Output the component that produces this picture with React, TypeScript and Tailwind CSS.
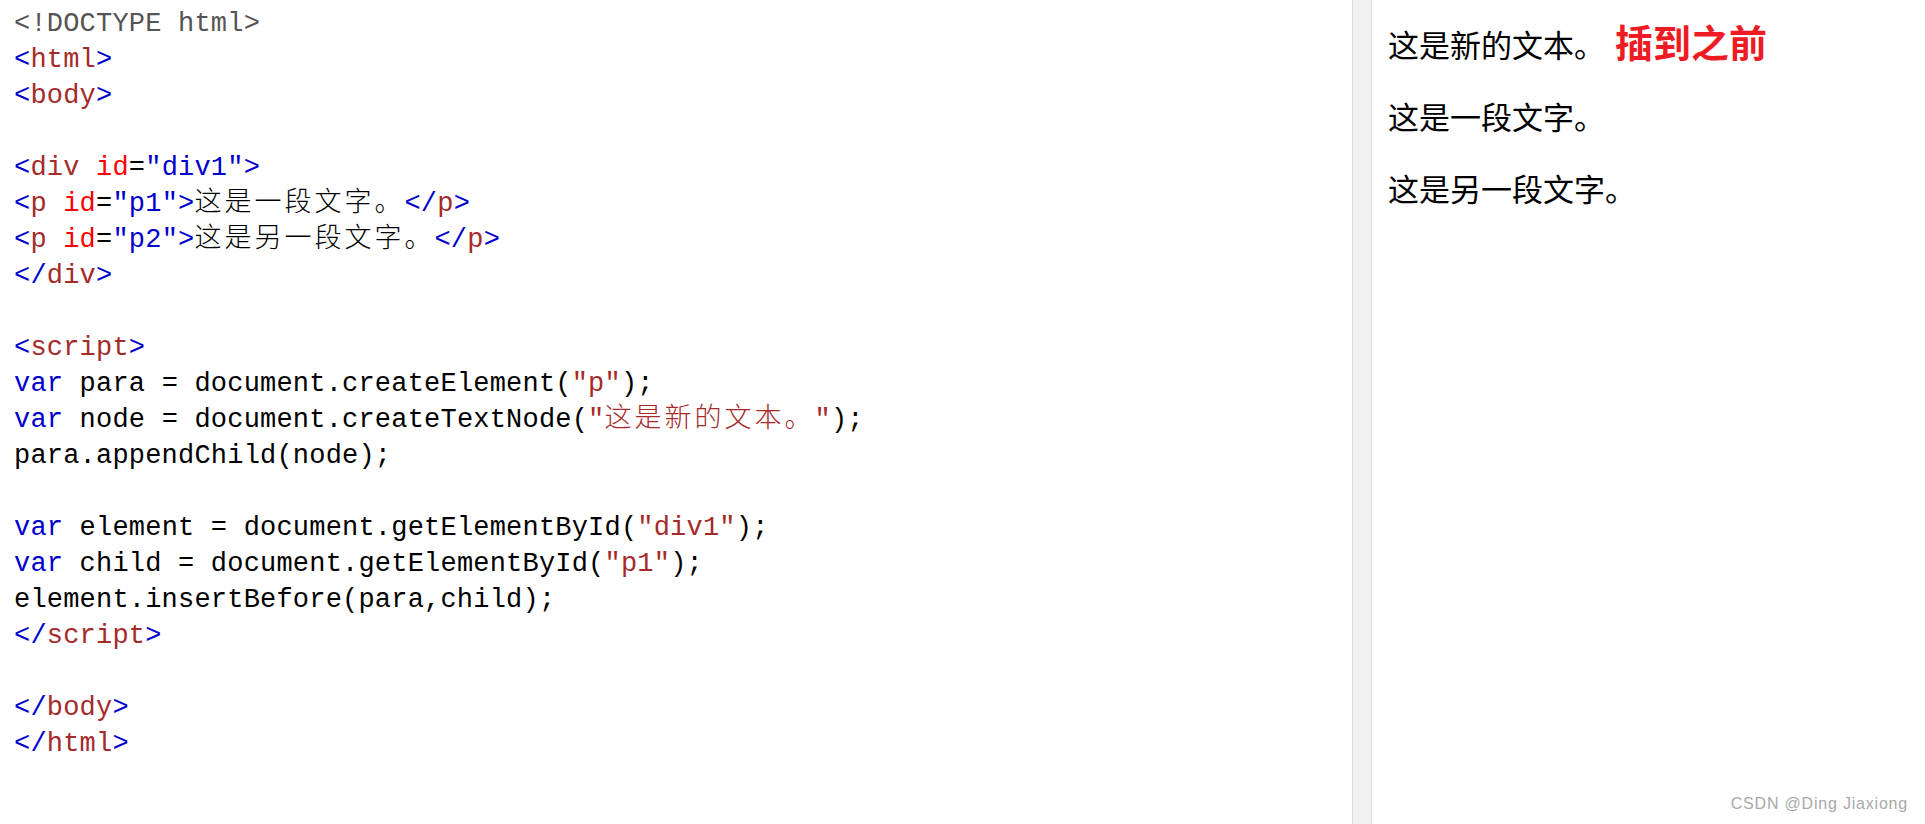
import React from "react";

type Seg = [string, string];

const B = "text-[#0000cd]";
const N = "text-[#a52a2a]";
const R = "text-[#ff0000]";
const K = "text-black";
const G = "text-[#555555]";
const CJ = "cjk";

const lines: Seg[][] = [
  [["<!DOCTYPE html>", G]],
  [["<", B], ["html", N], [">", B]],
  [["<", B], ["body", N], [">", B]],
  [],
  [["<", B], ["div", N], [" ", K], ["id", R], ["=", K], ["\"div1\"", B], [">", B]],
  [["<", B], ["p", N], [" ", K], ["id", R], ["=", K], ["\"p1\"", B], [">", B], ["这是一段文字。", CJ + K], ["</", B], ["p", N], [">", B]],
  [["<", B], ["p", N], [" ", K], ["id", R], ["=", K], ["\"p2\"", B], [">", B], ["这是另一段文字。", CJ + K], ["</", B], ["p", N], [">", B]],
  [["</", B], ["div", N], [">", B]],
  [],
  [["<", B], ["script", N], [">", B]],
  [["var", B], [" para = document.createElement(", K], ["\"p\"", N], [");", K]],
  [["var", B], [" node = document.createTextNode(", K], ["\"", N], ["这是新的文本。", CJ + N], ["\"", N], [");", K]],
  [["para.appendChild(node);", K]],
  [],
  [["var", B], [" element = document.getElementById(", K], ["\"div1\"", N], [");", K]],
  [["var", B], [" child = document.getElementById(", K], ["\"p1\"", N], [");", K]],
  [["element.insertBefore(para,child);", K]],
  [["</", B], ["script", N], [">", B]],
  [],
  [["</", B], ["body", N], [">", B]],
  [["</", B], ["html", N], [">", B]],
];

function Segment({ seg }: { seg: Seg }) {
  const [text, cls] = seg;
  if (cls.startsWith(CJ)) {
    const color = cls.slice(CJ.length);
    return (
      <span
        className={`${color} font-light tracking-[3px] leading-[0px]`}
        style={{ fontFamily: '"Noto Sans CJK SC", sans-serif' }}
      >
        {text}
      </span>
    );
  }
  return <span className={cls}>{text}</span>;
}

export default function App() {
  return (
    <div className="flex h-[824px] w-full overflow-hidden bg-white">
      <div
        className="w-[1352px] shrink-0 pl-[14px] pt-[6px] text-[27px] leading-[36px] tracking-[0.2px] whitespace-pre"
        style={{ fontFamily: '"Liberation Mono", "Noto Sans CJK SC", monospace' }}
      >
        {lines.map((l, i) => (
          <div key={i} className="h-[36px]">
            {l.map((s, j) => (
              <Segment key={j} seg={s} />
            ))}
          </div>
        ))}
      </div>
      <div className="w-[20px] shrink-0 border-x border-[#dcdcdc] bg-[#f1f1f1]" />
      <div
        className="relative flex-1 pl-[16px] pt-[18px] text-black"
        style={{ fontFamily: '"Noto Sans CJK SC", sans-serif' }}
      >
        <div className="flex flex-col gap-[27px] text-[31px] leading-[45px]">
          <p className="flex items-baseline">
            <span>这是新的文本。</span>
            <span className="ml-[10px] text-[38px] font-bold text-[#ed1c24] leading-[45px]">插到之前</span>
          </p>
          <p>这是一段文字。</p>
          <p>这是另一段文字。</p>
        </div>
        <div
          className="absolute bottom-[10px] right-[17px] text-[16px] leading-[20px] tracking-[0.8px] text-[#a8a8a8]"
          style={{ fontFamily: '"Liberation Sans", Arial, sans-serif' }}
        >
          CSDN @Ding Jiaxiong
        </div>
      </div>
    </div>
  );
}
